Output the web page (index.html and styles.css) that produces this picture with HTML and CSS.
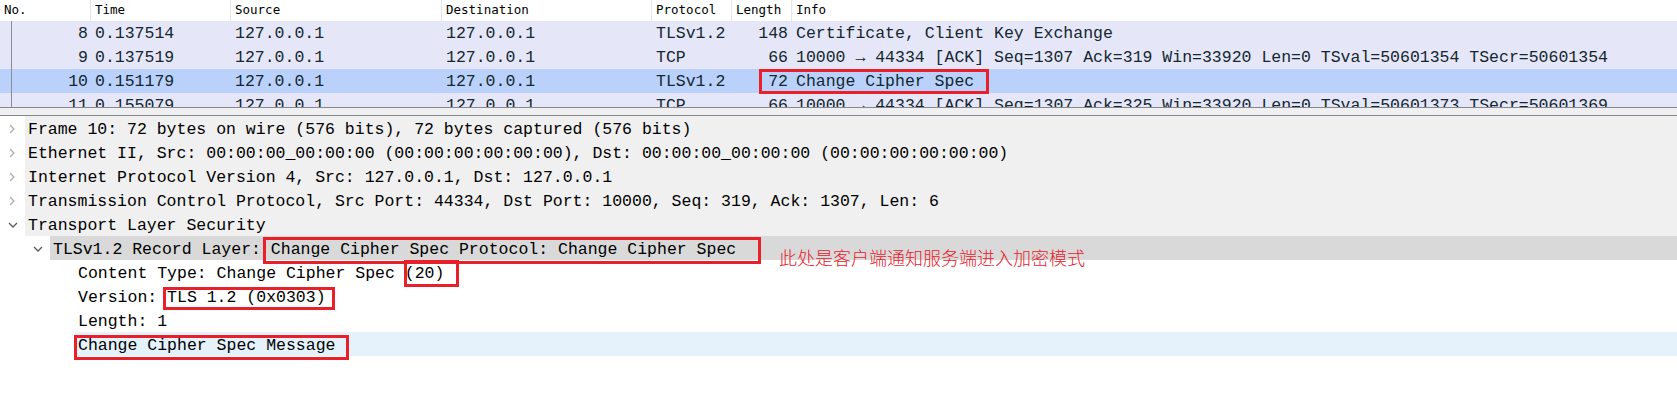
FILE: index.html
```html
<!DOCTYPE html>
<html lang="en">
<head>
<meta charset="utf-8">
<title>Wireshark</title>
<link rel="stylesheet" href="styles.css">
</head>
<body>
<div class="app">
  <div class="packet-list">
    <div class="grid plist-header">
      <div class="hcell">No.</div>
      <div class="hcell">Time</div>
      <div class="hcell">Source</div>
      <div class="hcell">Destination</div>
      <div class="hcell">Protocol</div>
      <div class="hcell">Length</div>
      <div class="hcell last">Info</div>
    </div>
    <div class="grid prow">
      <div class="cell no">8</div><div class="cell">0.137514</div><div class="cell">127.0.0.1</div><div class="cell">127.0.0.1</div><div class="cell">TLSv1.2</div><div class="cell num">148</div><div class="cell">Certificate, Client Key Exchange</div>
    </div>
    <div class="grid prow">
      <div class="cell no">9</div><div class="cell">0.137519</div><div class="cell">127.0.0.1</div><div class="cell">127.0.0.1</div><div class="cell">TCP</div><div class="cell num">66</div><div class="cell">10000 → 44334 [ACK] Seq=1307 Ack=319 Win=33920 Len=0 TSval=50601354 TSecr=50601354</div>
    </div>
    <div class="grid prow selected">
      <div class="cell no">10</div><div class="cell">0.151179</div><div class="cell">127.0.0.1</div><div class="cell">127.0.0.1</div><div class="cell">TLSv1.2</div><div class="cell num">72</div><div class="cell">Change Cipher Spec</div>
    </div>
    <div class="grid prow">
      <div class="cell no">11</div><div class="cell">0.155079</div><div class="cell">127.0.0.1</div><div class="cell">127.0.0.1</div><div class="cell">TCP</div><div class="cell num">66</div><div class="cell">10000 → 44334 [ACK] Seq=1307 Ack=325 Win=33920 Len=0 TSval=50601373 TSecr=50601369</div>
    </div>
  </div>

  <div class="splitter"></div>

  <div class="details">
    <div class="trow">
      <span class="tw"><svg class="chev closed" width="8" height="10" viewBox="0 0 8 10"><path d="M2 1 L6 5 L2 9" fill="none" stroke="currentColor" stroke-width="1.2"/></svg></span>
      <span class="tt shade1">Frame 10: 72 bytes on wire (576 bits), 72 bytes captured (576 bits)</span>
    </div>
    <div class="trow">
      <span class="tw"><svg class="chev closed" width="8" height="10" viewBox="0 0 8 10"><path d="M2 1 L6 5 L2 9" fill="none" stroke="currentColor" stroke-width="1.2"/></svg></span>
      <span class="tt shade1">Ethernet II, Src: 00:00:00_00:00:00 (00:00:00:00:00:00), Dst: 00:00:00_00:00:00 (00:00:00:00:00:00)</span>
    </div>
    <div class="trow">
      <span class="tw"><svg class="chev closed" width="8" height="10" viewBox="0 0 8 10"><path d="M2 1 L6 5 L2 9" fill="none" stroke="currentColor" stroke-width="1.2"/></svg></span>
      <span class="tt shade1">Internet Protocol Version 4, Src: 127.0.0.1, Dst: 127.0.0.1</span>
    </div>
    <div class="trow">
      <span class="tw"><svg class="chev closed" width="8" height="10" viewBox="0 0 8 10"><path d="M2 1 L6 5 L2 9" fill="none" stroke="currentColor" stroke-width="1.2"/></svg></span>
      <span class="tt shade1">Transmission Control Protocol, Src Port: 44334, Dst Port: 10000, Seq: 319, Ack: 1307, Len: 6</span>
    </div>
    <div class="trow">
      <span class="tw"><svg class="chev open" width="10" height="8" viewBox="0 0 10 8"><path d="M1 2 L5 6 L9 2" fill="none" stroke="currentColor" stroke-width="1.3"/></svg></span>
      <span class="tt shade1">Transport Layer Security</span>
    </div>
    <div class="trow lvl1">
      <span class="tw"><svg class="chev open" width="10" height="8" viewBox="0 0 10 8"><path d="M1 2 L5 6 L9 2" fill="none" stroke="currentColor" stroke-width="1.3"/></svg></span>
      <span class="tt shade2">TLSv1.2 Record Layer: Change Cipher Spec Protocol: Change Cipher Spec</span>
    </div>
    <div class="trow lvl2">
      <span class="tw"></span>
      <span class="tt">Content Type: Change Cipher Spec (20)</span>
    </div>
    <div class="trow lvl2">
      <span class="tw"></span>
      <span class="tt">Version: TLS 1.2 (0x0303)</span>
    </div>
    <div class="trow lvl2">
      <span class="tw"></span>
      <span class="tt">Length: 1</span>
    </div>
    <div class="trow lvl2">
      <span class="tw"></span>
      <span class="tt current">Change Cipher Spec Message</span>
    </div>
  </div>

  <div class="mark m1"></div>
  <div class="mark m2"></div>
  <div class="mark m3"></div>
  <div class="mark m4"></div>
  <div class="mark m5"></div>
  <div class="note">此处是客户端通知服务端进入加密模式</div>
</div>
</body>
</html>
```

FILE: styles.css
```css
html, body {
  margin: 0;
  padding: 0;
  background: #ffffff;
}

.app {
  position: relative;
  width: 1677px;
  height: 403px;
  overflow: hidden;
  background: #ffffff;
}

.grid {
  display: grid;
  grid-template-columns: 91px 140px 211px 210px 80px 60px 1fr;
}

/* ---------- packet list ---------- */
.packet-list {
  height: 107px;
  overflow: hidden;
  border-bottom: 1px solid #828790;
  background: #e7e6fb;
}

.plist-header {
  height: 21px;
  background: #ffffff;
  font-family: "DejaVu Sans Mono", "Liberation Mono", monospace;
  font-size: 12.5px;
  color: #000000;
}

.hcell {
  padding-left: 4px;
  line-height: 20px;
  border-right: 1px solid #e5e5e5;
  white-space: nowrap;
  overflow: hidden;
}
.hcell.last { border-right: none; }

.prow {
  box-sizing: border-box;
  height: 24px;
  padding-top: 1px;
  background: #e6e6f9;
  font-family: "Liberation Mono", monospace;
  font-size: 16.5px;
  line-height: 23px;
  color: #12272e;
}
.prow.selected { background: #bad2fb; }

.cell {
  padding-left: 4px;
  white-space: nowrap;
  overflow: hidden;
}
.cell.no {
  text-align: right;
  padding-left: 0;
  padding-right: 3px;
  margin-top: -1px;
  padding-top: 1px;
  background: linear-gradient(#8c8c98, #8c8c98) 11px 0 / 1px 100% no-repeat;
}
.cell.num {
  text-align: right;
  padding-left: 0;
  padding-right: 4px;
}

/* ---------- splitter ---------- */
.splitter {
  height: 7px;
  background: #f0f0f0;
  border-bottom: 1px solid #828790;
}

/* ---------- detail tree ---------- */
.details {
  font-family: "Liberation Mono", monospace;
  font-size: 16.5px;
  color: #000000;
}

.trow {
  display: flex;
  height: 24px;
  white-space: nowrap;
}
.trow.lvl1 { padding-left: 25px; }
.trow.lvl2 { padding-left: 50px; }

.tw {
  flex: 0 0 25px;
  display: flex;
  align-items: center;
  justify-content: center;
  padding-top: 1px;
}

.chev.closed { color: #ababab; margin-left: -2px; }
.chev.open { color: #5a5a5a; margin-left: 1px; }

.tt {
  flex: 1 1 auto;
  box-sizing: border-box;
  height: 24px;
  padding-left: 3px;
  padding-top: 3px;
  line-height: 21px;
}
.tt.shade1 { background: #f0f0f0; }
.tt.shade2 { background: #d9d9d9; }
.tt.current { background: #e5f1fb; }

/* ---------- annotations ---------- */
.mark {
  position: absolute;
  box-sizing: border-box;
  border: 3px solid #e8202a;
}
.m1 { left: 759px; top: 69px; width: 230px; height: 25px; }
.m2 { left: 263px; top: 237px; width: 498px; height: 27px; }
.m3 { left: 404px; top: 260px; width: 55px; height: 27px; }
.m4 { left: 163px; top: 287px; width: 172px; height: 23px; }
.m5 { left: 74px; top: 335px; width: 275px; height: 25px; }

.note {
  position: absolute;
  left: 779px;
  top: 246px;
  font-family: "Noto Sans CJK SC", sans-serif;
  font-size: 18px;
  line-height: 22px;
  font-weight: 300;
  color: #e8202a;
  white-space: nowrap;
}
```
